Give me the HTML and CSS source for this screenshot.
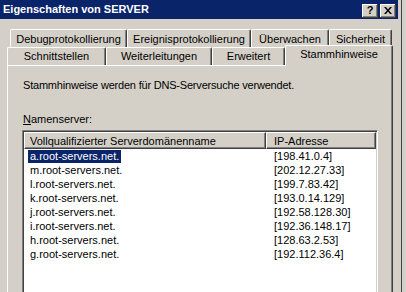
FILE: index.html
```html
<!DOCTYPE html>
<html lang="de">
<head>
<meta charset="utf-8">
<title>Eigenschaften von SERVER</title>
<link rel="stylesheet" href="styles.css">
</head>
<body>
<div class="screen">
  <div class="window">
    <div class="titlebar">
      <span class="title">Eigenschaften von SERVER</span>
      <div class="tbtns">
        <span class="tbtn help">?</span>
        <span class="tbtn close"><svg width="8" height="7" viewBox="0 0 8 7"><path d="M0 0h2l2 2.5 2-2.5h2l-3 3.5 3 3.5h-2l-2-2.5-2 2.5h-2l3-3.5z" fill="#000"/></svg></span>
      </div>
    </div>
    <div class="tabs">
      <div class="tabrow row1">
        <div class="tab t-debug">Debugprotokollierung</div>
        <div class="tab t-ereignis">Ereignisprotokollierung</div>
        <div class="tab t-ueber">Überwachen</div>
        <div class="tab t-sicher">Sicherheit</div>
      </div>
      <div class="tabrow row2">
        <div class="tab t-schnitt">Schnittstellen</div>
        <div class="tab t-weiter">Weiterleitungen</div>
        <div class="tab t-erw">Erweitert</div>
        <div class="tab t-stamm sel">Stammhinweise</div>
      </div>
    </div>
    <div class="panel">
      <p class="desc">Stammhinweise werden für DNS-Serversuche verwendet.</p>
      <p class="label"><u>N</u>amenserver:</p>
      <div class="listbox">
        <div class="lvhead">
          <div class="hcell h1">Vollqualifizierter Serverdomänenname</div>
          <div class="hcell h2">IP-Adresse</div>
        </div>
        <div class="lvrow"><span class="c1"><span class="item selected">a.root-servers.net.</span></span><span class="c2">[198.41.0.4]</span></div>
        <div class="lvrow"><span class="c1"><span class="item">m.root-servers.net.</span></span><span class="c2">[202.12.27.33]</span></div>
        <div class="lvrow"><span class="c1"><span class="item">l.root-servers.net.</span></span><span class="c2">[199.7.83.42]</span></div>
        <div class="lvrow"><span class="c1"><span class="item">k.root-servers.net.</span></span><span class="c2">[193.0.14.129]</span></div>
        <div class="lvrow"><span class="c1"><span class="item">j.root-servers.net.</span></span><span class="c2">[192.58.128.30]</span></div>
        <div class="lvrow"><span class="c1"><span class="item">i.root-servers.net.</span></span><span class="c2">[192.36.148.17]</span></div>
        <div class="lvrow"><span class="c1"><span class="item">h.root-servers.net.</span></span><span class="c2">[128.63.2.53]</span></div>
        <div class="lvrow"><span class="c1"><span class="item">g.root-servers.net.</span></span><span class="c2">[192.112.36.4]</span></div>
      </div>
    </div>
  </div>
  <div class="gutter"></div>
  <div class="edge"></div>
  <div class="outside"></div>
</div>
</body>
</html>
```
FILE: styles.css
```css
* { box-sizing: border-box; }
html, body { margin: 0; padding: 0; }
body {
  width: 406px;
  height: 292px;
  overflow: hidden;
  background: #d4d0c8;
  font-family: "Liberation Sans", Arial, sans-serif;
  font-size: 11px;
  color: #000;
}
p { margin: 0; }

.screen { display: flex; height: 292px; overflow: hidden; }
.window { width: 398px; height: 292px; display: flex; flex-direction: column; overflow: hidden; }
.gutter { width: 3px; background: #d4d0c8; }
.edge { width: 1px; background: #404040; }
.outside { flex: 1; background: #d4d0c8; }

/* title bar */
.titlebar {
  flex: none;
  height: 19px;
  background: #0a246a;
  display: flex;
  align-items: center;
  justify-content: space-between;
  padding: 0 2px 0 3px;
}
.title {
  color: #fff;
  font-weight: bold;
  font-size: 11px;
  line-height: 13px;
  margin-top: -1px;
}
.tbtns { display: flex; gap: 2px; margin-top: 2px; }
.tbtn {
  width: 16px;
  height: 14px;
  background: #d4d0c8;
  box-shadow: inset -1px -1px #404040, inset 1px 1px #fff, inset -2px -2px #808080;
  display: flex;
  align-items: center;
  justify-content: center;
}
.help { font-weight: bold; font-size: 11px; line-height: 12px; padding-bottom: 1px; }
.close svg { display: block; margin-bottom: 1px; }

/* tabs */
.tabs { flex: none; padding-top: 10px; }
.tabrow { display: flex; height: 18px; }
.row1 { padding-left: 10px; }
.row2 { padding-left: 7px; }
.tab {
  height: 18px;
  border-top: 1px solid #fff;
  border-left: 1px solid #fff;
  border-right: 1px solid #404040;
  border-top-left-radius: 2px;
  border-top-right-radius: 2px;
  box-shadow: inset -1px 0 #808080;
  text-align: center;
  line-height: 13px;
  white-space: nowrap;
  background: #d4d0c8;
}
.row1 .tab { padding-top: 3px; }
.row2 .tab { padding-top: 2px; }
.t-debug { width: 117px; }
.t-ereignis { width: 124px; }
.t-ueber { width: 78px; }
.t-sicher { width: 63px; }
.t-schnitt { width: 99px; }
.t-weiter { width: 106px; }
.t-erw { width: 73px; }
.t-stamm { width: 108px; }
.tab.sel {
  margin-top: -2px;
  height: 21px;
  position: relative;
  z-index: 1;
}

/* panel */
.panel {
  flex: 1;
  min-height: 0;
  overflow: hidden;
  margin-left: 7px;
  width: 386px;
  border-top: 1px solid #fff;
  border-left: 1px solid #fff;
  border-right: 1px solid #404040;
  box-shadow: inset -1px 0 #808080;
  padding-left: 14px;
  padding-top: 13px;
}
.desc { line-height: 13px; padding-left: 1px; letter-spacing: -0.2px; }
.label { line-height: 13px; padding-left: 1px; margin-top: 21px; }
.label u { text-decoration-thickness: 1px; text-underline-offset: 1px; }

/* list view */
.listbox {
  margin-top: 4px;
  width: 356px;
  height: 162px;
  background: #fff;
  border-top: 1px solid #808080;
  border-left: 1px solid #808080;
  border-right: 1px solid #fff;
  box-shadow: inset 1px 1px #404040, inset -1px 0 #d4d0c8;
  padding: 1px 1px 0 1px;
}
.lvhead { display: flex; height: 17px; }
.hcell {
  background: #d4d0c8;
  border-top: 1px solid #fff;
  border-left: 1px solid #fff;
  border-right: 1px solid #404040;
  border-bottom: 1px solid #404040;
  box-shadow: inset -1px -1px #808080;
  line-height: 13px;
  padding-top: 2px;
  white-space: nowrap;
  overflow: hidden;
}
.h1 { width: 242px; padding-left: 5px; }
.h2 { flex: 1; padding-left: 7px; }

.lvrow { display: flex; height: 14px; line-height: 14px; }
.c1 { width: 242px; padding-left: 4px; }
.c2 { padding-left: 8px; }
.item { display: inline-block; padding: 0 2px; height: 13px; line-height: 13px; }
.selected { background: #0a246a; color: #fff; }
```
